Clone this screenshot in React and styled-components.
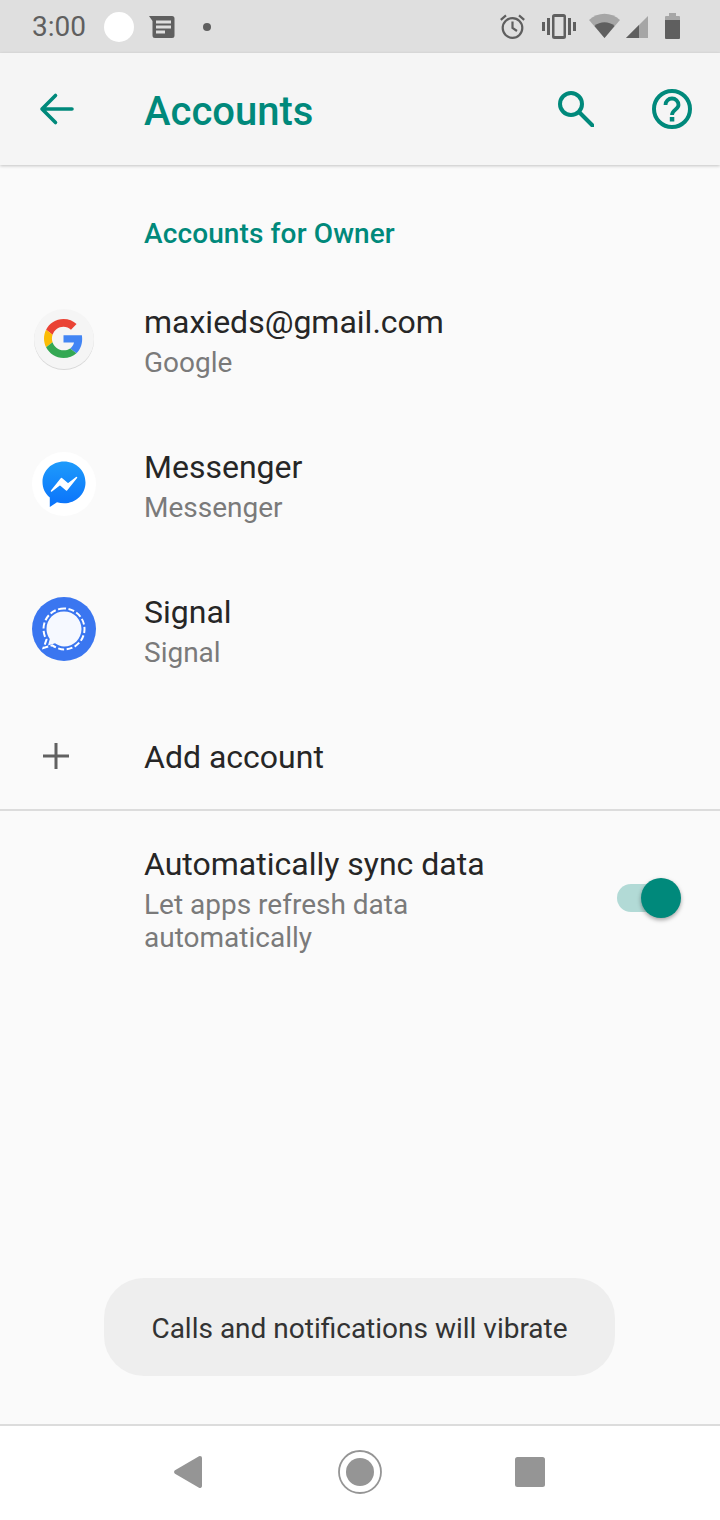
import React from 'react'
import styled, { createGlobalStyle } from 'styled-components'

const GlobalStyle = createGlobalStyle`
  html, body { margin: 0; padding: 0; background: #fafafa; }
  * { box-sizing: border-box; }
  body { font-family: Roboto, "Liberation Sans", sans-serif; }
`

const Screen = styled.div`
  position: relative;
  width: 720px;
  height: 1520px;
  display: flex;
  flex-direction: column;
  overflow: hidden;
  background: #fafafa;
`

const StatusBar = styled.div`
  height: 53px;
  flex: none;
  background: #dfdfdf;
  display: flex;
  align-items: center;
  padding: 0 40px 0 32px;
  color: #5f5f5f;
`

const Clock = styled.span`
  font-size: 28px;
  line-height: 53px;
  width: 72px;
`

const WhiteDot = styled.span`
  width: 30px;
  height: 30px;
  border-radius: 50%;
  background: #fff;
  margin-right: 17px;
`

const TinyDot = styled.span`
  width: 8px;
  height: 8px;
  border-radius: 50%;
  background: #5f5f5f;
  margin-left: 28px;
`

const StatusRight = styled.div`
  margin-left: auto;
  display: flex;
  align-items: flex-start;
  padding-top: 13px;
  height: 53px;
`

const StatusSvg = styled.svg`
  display: block;
  flex: none;
  margin-left: ${p => p.$left || 0}px;
  margin-top: ${p => p.$top || 0}px;
`

const NotesSvg = styled.svg`
  display: block;
  margin-left: -2px;
`

const Toolbar = styled.header`
  height: 112px;
  flex: none;
  background: #f5f5f5;
  box-shadow: 0 1px 3px rgba(0, 0, 0, 0.22);
  display: flex;
  align-items: center;
  padding: 0 28px 0 36px;
  position: relative;
  z-index: 1;
`

const Title = styled.h1`
  margin: 4px 0 0 68px;
  font-size: 40px;
  font-weight: 500;
  color: #00897b;
  flex: 1;
`

const ToolActions = styled.div`
  display: flex;
  align-items: center;
  gap: 58px;
`

const Content = styled.main`
  flex: 1;
  display: flex;
  flex-direction: column;
`

const SectionTitle = styled.div`
  height: 103px;
  padding: 51px 0 0 144px;
  font-size: 28px;
  line-height: 36px;
  font-weight: 500;
  letter-spacing: 0.12px;
  color: #00897b;
`

const Row = styled.div`
  height: ${p => p.$height || 145}px;
  display: flex;
  align-items: center;
`

const IconCell = styled.div`
  width: 144px;
  flex: none;
  padding-left: ${p => p.$pad || 32}px;
  padding-bottom: ${p => p.$lift || 0}px;
  display: flex;
  align-items: center;
`

const Texts = styled.div`
  flex: 1;
  display: flex;
  flex-direction: column;
`

const Primary = styled.div`
  font-size: 32px;
  line-height: 41px;
  color: #262626;
`

const AddLabel = styled(Primary)`
  margin-top: 2px;
`

const Secondary = styled.div`
  font-size: 28px;
  line-height: 33px;
  color: #7a7a7a;
  margin-top: 3px;
`

const Divider = styled.hr`
  margin: 0;
  border: 0;
  height: 2px;
  background: #dcdcdc;
`

const SyncRow = styled.div`
  display: flex;
  align-items: flex-start;
  padding: 33px 47px 0 144px;
`

const Switch = styled.div`
  position: relative;
  width: 56px;
  height: 28px;
  margin-top: 40px;
  margin-left: auto;
  border-radius: 14px;
  background: #b2dad6;
  flex: none;
`

const Thumb = styled.span`
  position: absolute;
  right: -8px;
  top: -6px;
  width: 40px;
  height: 40px;
  border-radius: 50%;
  background: #00897b;
  box-shadow: 0 2px 4px rgba(0, 0, 0, 0.35);
`

const Toast = styled.div`
  position: absolute;
  left: 104px;
  top: 1278px;
  width: 511px;
  height: 98px;
  padding-top: 2px;
  border-radius: 40px;
  background: #eeeeee;
  color: #333333;
  font-size: 28px;
  display: flex;
  align-items: center;
  justify-content: center;
`

const NavBar = styled.nav`
  height: 96px;
  flex: none;
  background: #fff;
  border-top: 2px solid #dcdcdc;
  display: flex;
  align-items: center;
  padding: 0 0 2px 174px;
  color: #959595;
`

const NavSvg = styled.svg`
  display: block;
  flex: none;
  margin-left: ${p => p.$left || 0}px;
`

const BackIcon = () => (
  <svg width="40" height="40" viewBox="0 0 40 40" fill="none" stroke="#00897b" strokeWidth="3.6" strokeLinecap="round" strokeLinejoin="round">
    <path d="M36 20H6M19.500 6.500L6 20l13.500 13.500" />
  </svg>
)

const SearchIcon = () => (
  <svg width="36" height="36" viewBox="0 0 36 36" fill="none" stroke="#00897b" strokeWidth="4" strokeLinecap="round">
    <circle cx="13" cy="13" r="11" />
    <path d="M21.500 21.500L34.500 34.500" />
  </svg>
)

const HelpIcon = () => (
  <svg width="40" height="40" viewBox="0 0 40 40" fill="none">
    <circle cx="20" cy="20" r="18" stroke="#00897b" strokeWidth="4" />
    <path d="M13.500 16a6.500 6.500 0 0 1 13 0c0 4.500-6.500 4.500-6.500 10" stroke="#00897b" strokeWidth="3.800" />
    <rect x="17.800" y="28" width="4.500" height="4.500" fill="#00897b" />
  </svg>
)

const NotesIcon = () => (
  <NotesSvg width="26" height="22" viewBox="0 0 26 22">
    <path d="M0 0h23a2.500 2.500 0 0 1 2.500 2.500v17a2.500 2.500 0 0 1-2.500 2.500H6a2.500 2.500 0 0 1-2.500-2.500V5z" fill="#5f5f5f" />
    <path d="M7 4.500h15v3H7zM7 9.500h15v3H7zM7 14.500h9v3H7z" fill="#dfdfdf" />
  </NotesSvg>
)

const AlarmIcon = () => (
  <StatusSvg $top={1} width="25" height="25" viewBox="0 0 25 25" fill="none" stroke="#5f5f5f" strokeWidth="2.200">
    <circle cx="12.500" cy="14" r="9.800" />
    <path d="M12.500 7.500V14l4.500 3M.8 5.800L6 1.400M24.200 5.800L19 1.400" />
  </StatusSvg>
)

const VibrateIcon = () => (
  <StatusSvg $left={17} $top={1} width="34" height="25" viewBox="0 0 34 25" fill="#5f5f5f">
    <path d="M10 2.500A2.500 2.500 0 0 1 12.500 0h9A2.500 2.500 0 0 1 24 2.500v20a2.500 2.500 0 0 1-2.500 2.500h-9A2.500 2.500 0 0 1 10 22.500zM12.500 3v19h9V3z" fillRule="evenodd" />
    <rect x="5" y="4" width="3" height="17" />
    <rect x="26" y="4" width="3" height="17" />
    <rect x="0" y="8" width="3" height="9" />
    <rect x="31" y="8" width="3" height="9" />
  </StatusSvg>
)

const WifiIcon = () => (
  <StatusSvg $left={13} width="31" height="25" viewBox="0 0 31 25">
    <path d="M0 7C9-1.500 22-1.500 31 7L15.500 25z" fill="#a6a6a6" />
    <path d="M5.500 13C11 8 20 8 25.500 13L15.500 25z" fill="#5f5f5f" />
  </StatusSvg>
)

const SignalIcon = () => (
  <StatusSvg $left={6} $top={3} width="22" height="22" viewBox="0 0 22 22">
    <path d="M0 22L22 0v22z" fill="#a6a6a6" />
    <path d="M0 22L13 9v13z" fill="#5f5f5f" />
  </StatusSvg>
)

const BatteryIcon = () => (
  <StatusSvg $left={17} width="15" height="26" viewBox="0 0 15 26">
    <path d="M4 0h7v3h3a1 1 0 0 1 1 1v4H0V4a1 1 0 0 1 1-1h3z" fill="#a6a6a6" />
    <path d="M0 7h15v18a1 1 0 0 1-1 1H1a1 1 0 0 1-1-1z" fill="#5f5f5f" />
  </StatusSvg>
)

const GoogleIcon = () => (
  <svg width="64" height="64" viewBox="0 0 64 64">
    <circle cx="32" cy="33" r="30" fill="#d8d8d8" />
    <circle cx="32" cy="32" r="30" fill="#f5f5f5" />
    <g transform="translate(12 12) scale(0.8125)">
      <path fill="#EA4335" d="M24 9.500c3.540 0 6.710 1.220 9.210 3.600l6.850-6.850C35.900 2.380 30.470 0 24 0 14.620 0 6.510 5.380 2.560 13.220l7.980 6.190C12.430 13.720 17.740 9.500 24 9.500z" />
      <path fill="#4285F4" d="M46.980 24.550c0-1.570-.15-3.090-.38-4.550H24v9.020h12.940c-.58 2.960-2.260 5.480-4.780 7.180l7.730 6c4.510-4.180 7.090-10.360 7.090-17.650z" />
      <path fill="#FBBC05" d="M10.530 28.590c-.48-1.450-.76-2.990-.76-4.590s.27-3.140.76-4.590l-7.980-6.190C.92 16.460 0 20.120 0 24c0 3.880.92 7.540 2.560 10.780l7.970-6.190z" />
      <path fill="#34A853" d="M24 48c6.480 0 11.930-2.130 15.890-5.810l-7.730-6c-2.150 1.450-4.920 2.300-8.160 2.300-6.260 0-11.570-4.220-13.470-9.910l-7.980 6.190C6.510 42.620 14.620 48 24 48z" />
    </g>
  </svg>
)

const MessengerIcon = () => (
  <svg width="64" height="64" viewBox="0 0 64 64">
    <defs>
      <linearGradient id="msgr" x1="0" y1="0" x2="0" y2="1">
        <stop offset="0" stopColor="#1e9bfb" />
        <stop offset="1" stopColor="#0a72fb" />
      </linearGradient>
    </defs>
    <circle cx="32" cy="32" r="32" fill="#fff" />
    <path d="M32 9.500C20 9.500 10.500 18.500 10.500 30c0 6.300 2.700 11.700 7.300 15.400V55l7.200-4.700c2.200.6 4.500.9 7 .9 12 0 21.500-9.200 21.500-20.800C53.500 18.500 44 9.500 32 9.500z" fill="url(#msgr)" />
    <path d="M19.500 39l10-12.500 6.500 5.500 8.500-6.500-10 12.500-6.500-5.500z" fill="#fff" stroke="#fff" strokeWidth="1.500" strokeLinejoin="round" />
  </svg>
)

const SignalLogo = () => (
  <svg width="64" height="64" viewBox="0 0 64 64">
    <circle cx="32" cy="32" r="32" fill="#3a76f0" />
    <path d="M32 14.500C22.200 14.500 14.500 22.200 14.500 32c0 3.800 1.200 7 3.300 10L16 48.500l7-2.200c2.700 1.500 5.700 3.200 9 3.200 9.800 0 17.500-7.700 17.500-17.500S41.800 14.500 32 14.500z" fill="#f6f9ff" />
    <path d="M32 11.500C20.700 11.500 11.500 20.700 11.500 32c0 3.900 1.100 7.500 3 10.600L11.500 51l8.800-2.700c3.300 2.200 7.400 4.200 11.700 4.200 11.300 0 20.500-9.200 20.500-20.500S43.300 11.500 32 11.500z" fill="none" stroke="#fff" strokeWidth="2" strokeDasharray="6 2.500" />
  </svg>
)

const PlusIcon = () => (
  <svg width="28" height="28" viewBox="0 0 28 28" fill="#616161">
    <path d="M12.500 1h3v11.500H27v3H15.500V27h-3V15.500H1v-3h11.500z" />
  </svg>
)

const NavBack = () => (
  <NavSvg width="28" height="32" viewBox="0 0 28 32" fill="currentColor">
    <path d="M26 0a2 2 0 0 1 2 2v28a2 2 0 0 1-3 1.700L1 17.700a2 2 0 0 1 0-3.400L25 .3z" />
  </NavSvg>
)

const NavHome = () => (
  <NavSvg $left={136} width="44" height="44" viewBox="0 0 44 44" fill="currentColor">
    <circle cx="22" cy="22" r="21" fill="none" stroke="currentColor" strokeWidth="1.800" />
    <circle cx="22" cy="22" r="14" />
  </NavSvg>
)

const NavRecent = () => (
  <NavSvg $left={133} width="30" height="30" viewBox="0 0 30 30" fill="currentColor">
    <rect width="30" height="30" rx="2.500" />
  </NavSvg>
)

const accounts = [
  { name: 'maxieds@gmail.com', type: 'Google', icon: <GoogleIcon /> },
  { name: 'Messenger', type: 'Messenger', icon: <MessengerIcon /> },
  { name: 'Signal', type: 'Signal', icon: <SignalLogo /> },
]

export default function App() {
  return (
    <Screen>
      <GlobalStyle />
      <StatusBar>
        <Clock>3:00</Clock>
        <WhiteDot />
        <NotesIcon />
        <TinyDot />
        <StatusRight>
          <AlarmIcon />
          <VibrateIcon />
          <WifiIcon />
          <SignalIcon />
          <BatteryIcon />
        </StatusRight>
      </StatusBar>
      <Toolbar>
        <BackIcon />
        <Title>Accounts</Title>
        <ToolActions>
          <SearchIcon />
          <HelpIcon />
        </ToolActions>
      </Toolbar>
      <Content>
        <SectionTitle>Accounts for Owner</SectionTitle>
        {accounts.map(a => (
          <Row key={a.name}>
            <IconCell $lift={3}>{a.icon}</IconCell>
            <Texts>
              <Primary>{a.name}</Primary>
              <Secondary>{a.type}</Secondary>
            </Texts>
          </Row>
        ))}
        <Row $height={106}>
          <IconCell $pad={42}><PlusIcon /></IconCell>
          <Texts>
            <AddLabel>Add account</AddLabel>
          </Texts>
        </Row>
        <Divider />
        <SyncRow>
          <Texts>
            <Primary>Automatically sync data</Primary>
            <Secondary>Let apps refresh data<br />automatically</Secondary>
          </Texts>
          <Switch><Thumb /></Switch>
        </SyncRow>
      </Content>
      <Toast>Calls and notifications will vibrate</Toast>
      <NavBar>
        <NavBack />
        <NavHome />
        <NavRecent />
      </NavBar>
    </Screen>
  )
}
